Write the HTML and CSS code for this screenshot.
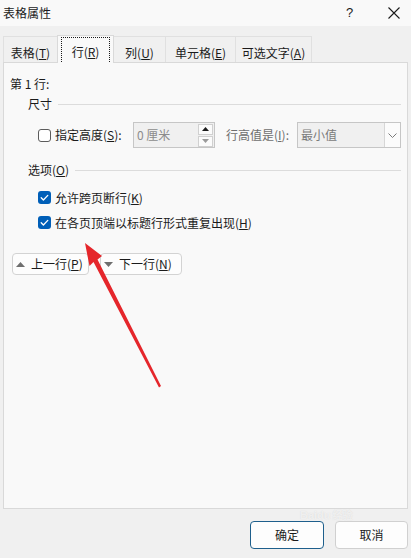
FILE: index.html
```html
<!DOCTYPE html>
<html lang="zh-CN">
<head>
<meta charset="utf-8">
<title>表格属性</title>
<link rel="stylesheet" href="styles.css">
</head>
<body>
<div class="dialog">
  <div class="titlebar">
    <span class="title">表格属性</span>
    <span class="help">?</span>
    <svg class="close" width="12" height="12" viewBox="0 0 12 12"><path d="M0.5 0.5 L11.5 11.5 M11.5 0.5 L0.5 11.5" stroke="#1b1b1b" stroke-width="1.1" fill="none"/></svg>
  </div>

  <div class="tabs">
    <div class="tab t1">表格(<u>T</u>)</div>
    <div class="tab t2 active"><span class="focus">行(<u>R</u>)</span></div>
    <div class="tab t3">列(<u>U</u>)</div>
    <div class="tab t4">单元格(<u>E</u>)</div>
    <div class="tab t5">可选文字(<u>A</u>)</div>
  </div>

  <div class="panel">
    <div class="rowlabel">第 1 行:</div>

    <div class="group"><span>尺寸</span><span class="rule"></span></div>

    <div class="size-row">
      <span class="box"></span>
      <span class="chk-text">指定高度(<u>S</u>):</span>
      <div class="spin">
        <span class="spin-val">0 厘米</span>
        <div class="spin-btns">
          <span class="sb up"><svg width="7" height="4" viewBox="0 0 7 4"><path d="M0 4 L3.5 0 L7 4 Z" fill="#1b1b1b"/></svg></span>
          <span class="sb down"><svg width="7" height="4" viewBox="0 0 7 4"><path d="M0 0 L3.5 4 L7 0 Z" fill="#9a9a9a"/></svg></span>
        </div>
      </div>
      <span class="lbl-dis">行高值是(<u>I</u>):</span>
      <div class="select">
        <span class="sel-val">最小值</span>
        <span class="drop"><svg width="9" height="5" viewBox="0 0 9 5"><path d="M0.5 0.5 L4.5 4.5 L8.5 0.5" stroke="#7a7a7a" stroke-width="1" fill="none"/></svg></span>
      </div>
    </div>

    <div class="group g2"><span>选项(<u>O</u>)</span><span class="rule"></span></div>

    <div class="opt first">
      <span class="box checked"><svg width="13" height="13" viewBox="0 0 13 13"><path d="M3.2 6.8 L5.4 9 L9.8 4.4" stroke="#fff" stroke-width="1.3" fill="none" stroke-linecap="round" stroke-linejoin="round"/></svg></span>
      <span class="opt-text">允许跨页断行(<u>K</u>)</span>
    </div>
    <div class="opt">
      <span class="box checked"><svg width="13" height="13" viewBox="0 0 13 13"><path d="M3.2 6.8 L5.4 9 L9.8 4.4" stroke="#fff" stroke-width="1.3" fill="none" stroke-linecap="round" stroke-linejoin="round"/></svg></span>
      <span class="opt-text">在各页顶端以标题行形式重复出现(<u>H</u>)</span>
    </div>

    <div class="navbtns">
      <button class="nav prev"><svg width="9" height="5" viewBox="0 0 9 5"><path d="M0 5 L4.5 0 L9 5 Z" fill="#6f6f6f"/></svg><span>上一行(<u>P</u>)</span></button>
      <button class="nav next"><svg width="9" height="5" viewBox="0 0 9 5"><path d="M0 0 L4.5 5 L9 0 Z" fill="#6f6f6f"/></svg><span>下一行(<u>N</u>)</span></button>
    </div>
  </div>

  <div class="footer">
    <button class="btn ok">确定</button>
    <button class="btn">取消</button>
  </div>

  <div class="watermark">Baidu<span class="wm-cn">经验</span></div>

  <svg class="arrow" width="411" height="558" viewBox="0 0 411 558">
    <polygon points="85,243 102,256 97.5,259.5 161,386 159,387.5 93.5,262 89.5,266" fill="#e5262b"/>
  </svg>
</div>
</body>
</html>
```

FILE: styles.css
```css
* { box-sizing: border-box; }
html, body { margin: 0; padding: 0; }
body {
  width: 411px;
  height: 558px;
  overflow: hidden;
  background: #f0f0f0;
  font-family: "Noto Sans CJK SC", "Microsoft YaHei", sans-serif;
  font-size: 12px;
  line-height: 16px;
  color: #1b1b1b;
}
u { text-underline-offset: 1px; }

.dialog { position: relative; width: 411px; height: 558px; }

.titlebar {
  height: 26px;
  background: #f9f9f9;
  display: flex;
  align-items: center;
  padding-left: 3px;
}
.title { flex: 1; }
.help { width: 8px; font-family: "Liberation Sans", sans-serif; font-size: 13px; margin-right: 34px; }
.close { margin-right: 11px; }

.tabs {
  display: flex;
  align-items: flex-end;
  height: 26px;
  margin-top: 10px;
  padding-left: 3px;
  position: relative;
  z-index: 2;
}
.tab {
  height: 26px;
  border: 1px solid #e0e0e0;
  border-bottom: none;
  padding-top: 8px;
  text-align: center;
  white-space: nowrap;
  background: #f0f0f0;
}
.tab + .tab { margin-left: -1px; }
.t1 { width: 55px; }
.t2 { width: 57px; }
.t3 { width: 53px; }
.t4 { width: 71px; }
.t5 { width: 77px; }
.tab.active {
  height: 28px;
  margin-bottom: -1px;
  background: #f9f9f9;
  border-color: #d9d9d9;
  padding: 1px 3px 0;
  position: relative;
}
.focus {
  display: block;
  height: 25px;
  border: 1px dotted #1b1b1b;
  border-bottom: none;
  padding-top: 6px;
}

.panel {
  position: relative;
  z-index: 1;
  margin: 0 3px;
  height: 447px;
  border: 1px solid #d9d9d9;
  background: #f9f9f9;
  padding: 13px 6px 0 6px;
}
.rowlabel { height: 16px; }

.group {
  display: flex;
  align-items: center;
  height: 16px;
  margin-top: 4px;
  padding-left: 18px;
}
.group .rule { flex: 1; height: 1px; background: #dcdcdc; margin-left: 6px; }
.group.g2 { margin-top: 14px; }

.box {
  width: 13px;
  height: 13px;
  border: 1px solid #5c5c5c;
  border-radius: 3px;
  background: #fff;
  flex: none;
  display: block;
}
.box.checked { border: none; background: #005fb8; }
.box svg { display: block; }

.size-row {
  display: flex;
  align-items: center;
  height: 26px;
  margin-top: 10px;
  padding-left: 28px;
}
.chk-text { width: 78px; margin-left: 4px; white-space: nowrap; }

.spin {
  width: 82px;
  height: 26px;
  border: 1px solid #c6c6c6;
  background: #f0f0f0;
  display: flex;
  align-items: center;
}
.spin-val { color: #8c8c8c; padding-left: 3px; flex: 1; }
.spin-btns {
  display: flex;
  flex-direction: column;
  gap: 1px;
  margin-right: 1px;
  width: 15px;
}
.sb {
  height: 11px;
  display: flex;
  align-items: center;
  justify-content: center;
  background: #fbfbfb;
  border: 1px solid #d0d0d0;
}
.sb svg { display: block; }

.lbl-dis { margin-left: 11px; width: 71px; color: #6e6e6e; white-space: nowrap; }

.select {
  width: 104px;
  height: 26px;
  border: 1px solid #c6c6c6;
  background: #f0f0f0;
  display: flex;
  align-items: stretch;
}
.sel-val { flex: 1; color: #7a7a7a; padding-left: 3px; display: flex; align-items: center; }
.drop {
  width: 16px;
  background: #fbfbfb;
  border-left: 1px solid #d6d6d6;
  display: flex;
  align-items: center;
  justify-content: center;
}
.drop svg { display: block; }

.opt {
  display: flex;
  align-items: center;
  height: 25px;
  padding-left: 28px;
}
.opt.first { margin-top: 7px; }
.opt-text { margin-left: 4px; white-space: nowrap; }

.navbtns {
  display: flex;
  gap: 11px;
  margin-top: 18px;
  padding-left: 2px;
}
.nav {
  height: 22px;
  border: 1px solid #d3d3d3;
  border-radius: 4px;
  background: #fdfdfd;
  font: inherit;
  color: inherit;
  display: flex;
  align-items: center;
  padding: 0 0 0 3px;
  white-space: nowrap;
}
.nav svg { display: block; margin-right: 6px; }
.prev { width: 77px; }
.next { width: 82px; }

.footer {
  display: flex;
  justify-content: flex-end;
  gap: 11px;
  padding: 12px 3px 0 0;
}
.btn {
  width: 73px;
  height: 28px;
  border: 1px solid #d0d0d0;
  border-radius: 4px;
  background: #fdfdfd;
  font: inherit;
  color: inherit;
  padding: 0;
}
.btn.ok { width: 74px; border-color: #1e5f8c; }

.watermark {
  position: absolute;
  left: 300px;
  top: 509px;
  font-family: "Liberation Sans", sans-serif;
  font-size: 11px;
  font-weight: bold;
  line-height: 12px;
  color: rgba(255, 255, 255, 0.6);
  text-shadow: 0 0 1px rgba(150, 150, 150, 0.3);
  pointer-events: none;
  z-index: 3;
}
.wm-cn { font-family: "Noto Sans CJK SC", sans-serif; font-size: 10px; margin-left: 2px; }

.arrow {
  position: absolute;
  left: 0;
  top: 0;
  pointer-events: none;
  z-index: 4;
}
```
